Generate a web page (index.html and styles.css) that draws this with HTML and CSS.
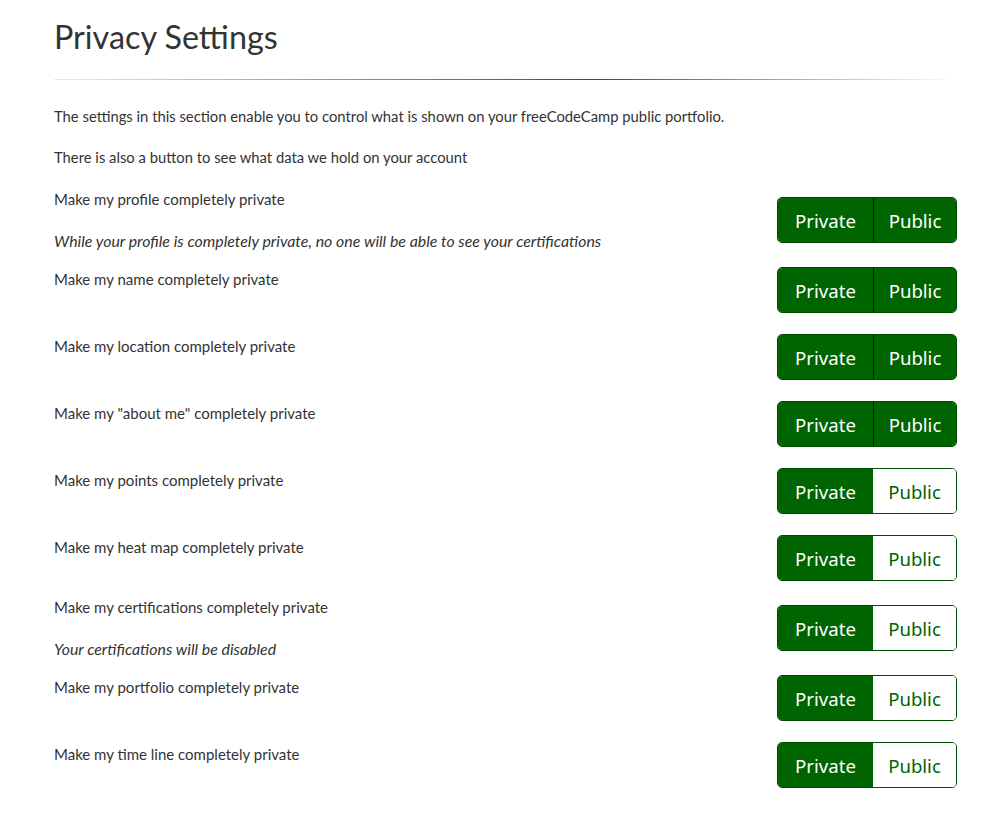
FILE: index.html
```html
<!DOCTYPE html>
<html lang="en">
<head>
<meta charset="utf-8">
<title>Privacy Settings</title>
<link rel="stylesheet" href="styles.css">
</head>
<body>
<main class="page">
  <h2 class="title">Privacy Settings</h2>
  <hr class="divider">
  <p class="intro">The settings in this section enable you to control what is shown on your freeCodeCamp public portfolio.</p>
  <p class="intro">There is also a button to see what data we hold on your account</p>

  <div class="settings">
    <div class="setting with-note">
      <div class="setting-text">
        <p class="label">Make my profile completely private</p>
        <p class="note">While your profile is completely private, no one will be able to see your certifications</p>
      </div>
      <div class="toggle"><span class="opt active">Private</span><span class="opt active">Public</span></div>
    </div>
    <div class="setting">
      <div class="setting-text"><p class="label">Make my name completely private</p></div>
      <div class="toggle"><span class="opt active">Private</span><span class="opt active">Public</span></div>
    </div>
    <div class="setting">
      <div class="setting-text"><p class="label">Make my location completely private</p></div>
      <div class="toggle"><span class="opt active">Private</span><span class="opt active">Public</span></div>
    </div>
    <div class="setting">
      <div class="setting-text"><p class="label">Make my "about me" completely private</p></div>
      <div class="toggle"><span class="opt active">Private</span><span class="opt active">Public</span></div>
    </div>
    <div class="setting">
      <div class="setting-text"><p class="label">Make my points completely private</p></div>
      <div class="toggle"><span class="opt active">Private</span><span class="opt">Public</span></div>
    </div>
    <div class="setting">
      <div class="setting-text"><p class="label">Make my heat map completely private</p></div>
      <div class="toggle"><span class="opt active">Private</span><span class="opt">Public</span></div>
    </div>
    <div class="setting with-note">
      <div class="setting-text">
        <p class="label">Make my certifications completely private</p>
        <p class="note">Your certifications will be disabled</p>
      </div>
      <div class="toggle"><span class="opt active">Private</span><span class="opt">Public</span></div>
    </div>
    <div class="setting">
      <div class="setting-text"><p class="label">Make my portfolio completely private</p></div>
      <div class="toggle"><span class="opt active">Private</span><span class="opt">Public</span></div>
    </div>
    <div class="setting">
      <div class="setting-text"><p class="label">Make my time line completely private</p></div>
      <div class="toggle"><span class="opt active">Private</span><span class="opt">Public</span></div>
    </div>
  </div>
</main>
</body>
</html>
```

FILE: styles.css
```css
* { box-sizing: border-box; }

html, body {
  margin: 0;
  padding: 0;
  background: #fff;
}

body {
  font-family: Lato, "Liberation Sans", sans-serif;
  color: #333;
  font-size: 15px;
  line-height: 20px;
}

.page {
  width: 903px;
  margin-left: 54px;
  padding-top: 17px;
}

.title {
  margin: 0;
  font-weight: 400;
  font-size: 32.3px;
  line-height: 40px;
  color: #333;
}

.divider {
  border: 0;
  height: 1px;
  margin: 22px 0 26px;
  background: linear-gradient(to right, rgba(0,0,0,0.08), rgba(0,0,0,0.72) 60%, rgba(0,0,0,0));
}

.intro {
  margin: 0 0 21px;
  font-size: 14.8px;
}

.settings {
  display: flex;
  flex-direction: column;
}

.setting {
  display: flex;
  align-items: center;
  justify-content: space-between;
  margin-bottom: 21px;
}

.setting.with-note {
  margin-top: -5px;
  margin-bottom: 16px;
}

.settings .setting:first-child {
  margin-top: 1px;
}

.setting-text p {
  margin: 0;
}

.label {
  margin-bottom: 22px !important;
}

.note {
  font-style: italic;
  font-size: 15.9px;
}

.toggle {
  display: flex;
  width: 180px;
  height: 46px;
  border: 1px solid #004d00;
  border-radius: 5px;
  overflow: hidden;
  font-family: "Noto Sans", "Open Sans", sans-serif;
  font-size: 18.6px;
}

.opt {
  display: flex;
  align-items: center;
  justify-content: center;
  background: #fff;
  color: #006400;
  padding-top: 1px;
}

.opt:first-child {
  width: 95px;
}

.opt:last-child {
  flex: 1;
}

.opt.active {
  background: #006400;
  color: #fff;
}

.opt.active + .opt.active {
  border-left: 1px solid #002000;
}
```
